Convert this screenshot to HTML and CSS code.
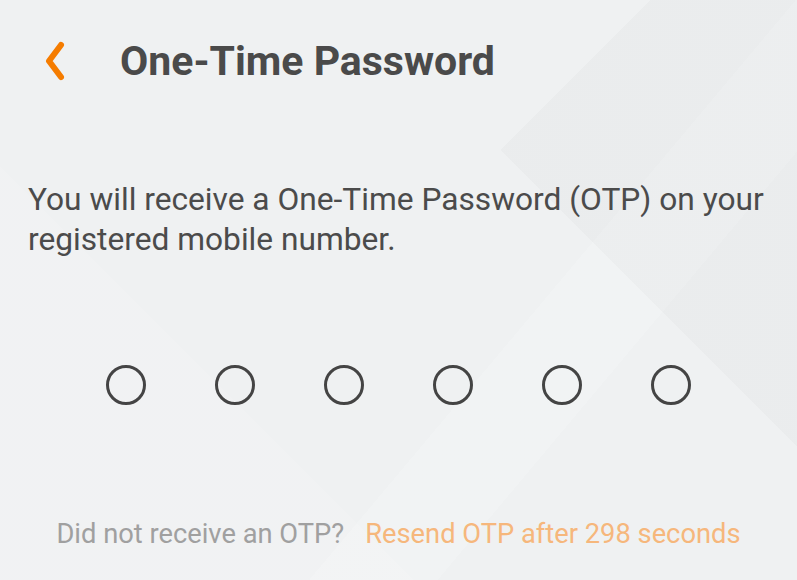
FILE: index.html
```html
<!DOCTYPE html>
<html>
<head>
  <title>One-Time Password</title>
  <meta name="viewport" content="width=device-width, initial-scale=1.0">
  <link rel="stylesheet" href="styles.css">
</head>
<body>
    <div class="otp-screen">
        <div class="header">
            <a class="back" href="#">
                <svg width="24" height="40" viewBox="0 0 24 40">
                    <path d="M19 4 L7 20 L19 36" fill="none" stroke="#f57c00" stroke-width="6" stroke-linecap="round" stroke-linejoin="round"/>
                </svg>
            </a>
            <h1 class="title">One-Time Password</h1>
        </div>
        <p class="info">You will receive a One-Time Password (OTP) on your registered mobile number.</p>
        <div class="otp-row">
            <span class="dot"></span>
            <span class="dot"></span>
            <span class="dot"></span>
            <span class="dot"></span>
            <span class="dot"></span>
            <span class="dot"></span>
        </div>
        <div class="resend">
            <span class="muted">Did not receive an OTP?</span>
            <span class="timer">Resend OTP after 298 seconds</span>
        </div>
    </div>
</body>
</html>
```

FILE: styles.css
```css
  body {
  font-family: Roboto, "Liberation Sans", sans-serif;
  margin: 0;
  padding: 0;
  min-height: 100vh;
  background-color: #eff1f2;
  background-image:
      conic-gradient(from 0deg at 500px 150px, transparent 45deg, rgba(0, 0, 0, 0.018) 45deg, rgba(0, 0, 0, 0.018) 135deg, transparent 135deg),
      linear-gradient(130deg, transparent 0%, transparent 62%, rgba(255, 255, 255, 0.15) 62%, rgba(255, 255, 255, 0.15) 72%, transparent 72%),
      linear-gradient(45deg, rgba(255, 255, 255, 0.1) 0%, rgba(255, 255, 255, 0.1) 30%, transparent 30%);
}

  .otp-screen {
      display: flex;
      flex-direction: column;
  }
  .header {
      display: flex;
      align-items: center;
      padding: 38px 0 0 42px;
      height: 46px;
  }
  .back {
      display: flex;
      width: 24px;
      height: 40px;
  }
  .title {
      margin: 0 0 0 54px;
      font-size: 41px;
      font-weight: 700;
      color: #4a4a4a;
      line-height: 46px;
  }
  .info {
      margin: 96px 0 0 28px;
      font-size: 31.7px;
      line-height: 40px;
      color: #4b4b4b;
  }
  .otp-row {
      display: flex;
      justify-content: center;
      gap: 69px;
      margin-top: 105px;
  }
  .dot {
      width: 34px;
      height: 34px;
      border: 3px solid #444;
      border-radius: 50%;
  }
  .resend {
      margin-top: 113px;
      font-size: 27.3px;
      line-height: 32px;
      display: flex;
      justify-content: center;
      gap: 21px;
  }
  .muted {
      color: #a0a0a0;
  }
  .timer {
      color: #f6b77c;
  }
```
